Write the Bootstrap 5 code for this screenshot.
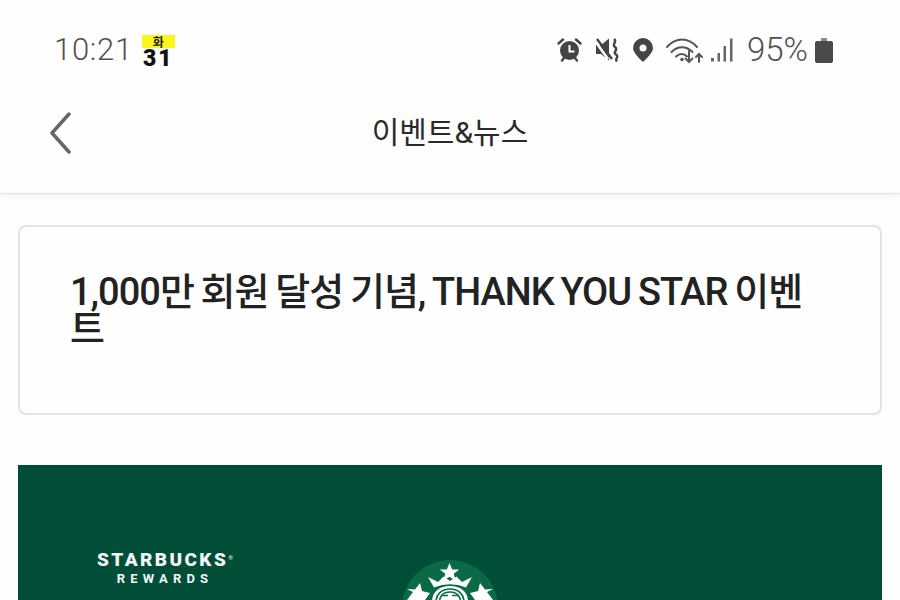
<!DOCTYPE html>
<html lang="ko">
<head>
<meta charset="UTF-8">
<title>이벤트&amp;뉴스</title>
<link href="https://cdn.jsdelivr.net/npm/bootstrap@5.3.0/dist/css/bootstrap.min.css" rel="stylesheet">
<style>
  html, body { height: 600px; overflow: hidden; }
  body { background: #fefefe; font-family: Roboto, "Noto Sans CJK KR", sans-serif; color: #222; }
  .status-row { height: 95px; padding: 32px 67px 0 54px; color: #555; }
  .clock { font-size: 31px; line-height: 36px; font-weight: 300; color: #505050; letter-spacing: .7px; }
  .day-chip { width: 33px; margin-left: 9px; margin-top: 1px; text-align: center; }
  .day-chip b { display: block; background: #f8f51f; color: #222; font-size: 12px; line-height: 13px; font-weight: 700; font-family: "Noto Sans CJK KR", sans-serif; }
  .day-chip i { display: block; margin-top: 2px; font-style: normal; font-weight: 900; font-size: 23px; line-height: 17px; letter-spacing: 2px; color: #111; font-family: Roboto, sans-serif; }
  .batt-text { font-size: 33px; line-height: 36px; font-weight: 300; color: #505050; margin-left: 14px; margin-right: 7px; }
  .gap-wide { margin-left: 14px; }
  .gap-narrow { margin-left: 13px; }
  .gap-mid { margin-left: 13px; }
  .gap-tight { margin-left: 7px; }
  .app-head { height: 99px; border-bottom: 1px solid #e4e4e4; box-shadow: 0 3px 6px rgba(0,0,0,.05); padding-bottom: 22px; }
  .back-btn { left: 49px; top: 17px; }
  .head-title { font-size: 30px; line-height: 36px; color: #2a2a2a; }
  .title-box { margin: 31px 18px 0; height: 190px; border: 2px solid #e2e2e2; border-radius: 8px; padding: 47px 50px 0; background: #fefefe; }
  .title-box h1 { font-size: 38px; line-height: 37px; font-weight: 500; letter-spacing: -1px; word-spacing: -1.7px; color: #222; margin: 0; word-break: break-all; }
  .promo { margin: 50px 18px 0; height: 135px; background: #004e37; overflow: hidden; }
  .rewards { left: 59px; top: 85px; width: 176px; color: #f3f6f4; font-family: Roboto, sans-serif; }
  .rewards b { display: block; font-size: 19px; line-height: 20px; font-weight: 900; letter-spacing: 2.4px; }
  .rewards sup { font-size: 6px; top: -1em; letter-spacing: 0; }
  .rewards span { display: block; font-size: 13px; line-height: 18px; font-weight: 700; letter-spacing: 5.2px; }
  .siren { left: 382px; top: 95px; }
</style>
</head>
<body>
  <div class="status-row d-flex align-items-start justify-content-between">
    <div class="d-flex align-items-center">
      <span class="clock">10:21</span>
      <span class="day-chip"><b>화</b><i>31</i></span>
    </div>
    <div class="d-flex align-items-center">
      <!-- alarm -->
      <svg width="25" height="24" viewBox="0 0 25 24"><path d="M1.500 5.500 6 1.500M23.500 5.500 19 1.500M5 22.500l2-2.500M20 22.500 18 20" stroke="#444" stroke-width="2.400" stroke-linecap="round"/><circle cx="12.500" cy="12.500" r="9.500" fill="#444"/><path d="M12.500 7v6.500h5" fill="none" stroke="#fff" stroke-width="2"/></svg>
      <!-- vibrate mute -->
      <svg class="gap-wide" width="24" height="24" viewBox="0 0 24 24"><path d="M0 7h5l8-6.500v22L5 16H0z" fill="#444"/><path d="M-1 3l13 18" stroke="#fff" stroke-width="2.500"/><path d="M1 1l15 20" stroke="#444" stroke-width="2.400"/><path d="M18 1c4 3-3 5 1 8s-3 5 1 7.500-2 4 1 7" fill="none" stroke="#444" stroke-width="2.400"/></svg>
      <!-- location -->
      <svg class="gap-narrow" width="20" height="24" viewBox="0 0 20 24"><path fill-rule="evenodd" d="M10 0a10 10 0 0 1 10 10c0 5.500-10 14-10 14S0 15.500 0 10A10 10 0 0 1 10 0zm0 6.500a3.500 3.500 0 1 0 0 7 3.500 3.500 0 0 0 0-7z" fill="#444"/></svg>
      <!-- wifi -->
      <svg class="gap-mid" width="38" height="27" viewBox="0 0 38 27"><g fill="none" stroke="#555" stroke-width="2" stroke-linecap="round"><path d="M1 10c9-10 21-10 30 0"/><path d="M5.500 15c6-6.500 15-6.500 21 0"/><path d="M10 19.500c3.500-3.500 8-3.500 11 0"/><path d="M23 14v11M19.500 21.500l3.500 3.500 3.500-3.500"/><path d="M33 25v-8M30 20l3-3 3 3"/></g><circle cx="16" cy="22.500" r="1.800" fill="#555"/></svg>
      <!-- signal -->
      <svg class="gap-tight" width="22" height="24" viewBox="0 0 22 24"><g fill="#666"><rect x="0" y="20" width="3" height="3.500"/><rect x="6.500" y="15" width="2.500" height="8.500"/><rect x="12.500" y="8" width="2.500" height="15.500"/><rect x="19" y="0.500" width="2.500" height="23"/></g></svg>
      <span class="batt-text">95%</span>
      <!-- battery -->
      <svg width="18" height="25" viewBox="0 0 18 25"><rect x="6" y="0" width="6" height="4" fill="#8a8a8a"/><rect x="0" y="3" width="18" height="22" rx="2" fill="#4a4a4a"/></svg>
    </div>
  </div>
  <div class="app-head position-relative d-flex align-items-center justify-content-center">
    <svg class="back-btn position-absolute" width="22" height="42" viewBox="0 0 22 42"><path d="M20 2 3 21l17 19" fill="none" stroke="#666" stroke-width="3.500" stroke-linecap="round" stroke-linejoin="round"/></svg>
    <span class="head-title">이벤트&amp;뉴스</span>
  </div>
  <div class="title-box">
    <h1>1,000만 회원 달성 기념, THANK YOU STAR 이벤트</h1>
  </div>
  <div class="promo position-relative">
    <div class="rewards position-absolute text-center"><b>STARBUCKS<sup>®</sup></b><span>REWARDS</span></div>
    <svg class="siren position-absolute" width="100" height="100" viewBox="0 0 100 100">
      <circle cx="50" cy="48" r="48" fill="#0a6a45"/>
      <path d="M49.500 3l2.700 6.500h7l-5.500 4.300 2 7-6.200-4-6.200 4 2-7-5.500-4.300h7z" fill="#fff"/>
      <path d="M28 17l10 5 5.500-5.500 6.500 4.500 6.500-4.500L62 22l10-5-6 10.500Q50 21 34 27.500z" fill="#fff"/>
      <path d="M20 23l2 8 8 2-5 7H7l6-8-6-3 8 .5z" fill="#fff"/>
      <path d="M80 23l-2 8-8 2 5 7h18l-6-8 6-3-8 .5z" fill="#fff"/>
      <path d="M32 42c0-10 7-16 18-16s18 6 18 16z" fill="#fff"/>
      <path d="M36 42c0-7 5-13 14-13s14 6 14 13" fill="none" stroke="#0a6a45" stroke-width="1.600"/>
      <path d="M39.500 42c0-5 3-10 10.500-10s10.500 5 10.500 10" fill="none" stroke="#0a6a45" stroke-width="1.600"/>
      <path d="M42.500 35.500h5.500M52 35.500h5.500" stroke="#0a6a45" stroke-width="1.600"/>
    </svg>
  </div>
  <script src="https://cdn.jsdelivr.net/npm/bootstrap@5.3.0/dist/js/bootstrap.bundle.min.js"></script>
</body>
</html>
